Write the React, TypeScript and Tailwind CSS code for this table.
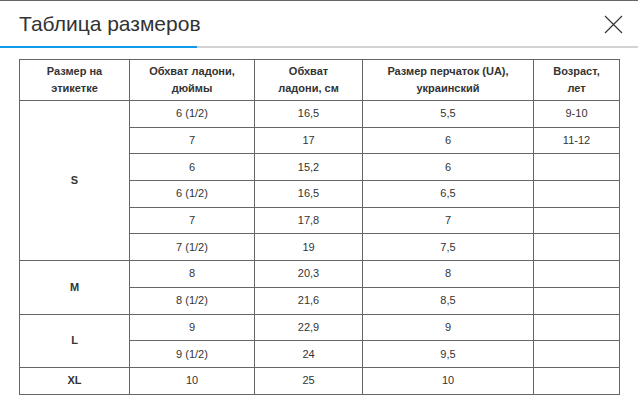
import React from "react";

type Row = { size?: string; span?: number; inch: string; cm: string; ua: string; age?: string };

const rows: Row[] = [
  { size: "S", span: 6, inch: "6 (1/2)", cm: "16,5", ua: "5,5", age: "9-10" },
  { inch: "7", cm: "17", ua: "6", age: "11-12" },
  { inch: "6", cm: "15,2", ua: "6" },
  { inch: "6 (1/2)", cm: "16,5", ua: "6,5" },
  { inch: "7", cm: "17,8", ua: "7" },
  { inch: "7 (1/2)", cm: "19", ua: "7,5" },
  { size: "M", span: 2, inch: "8", cm: "20,3", ua: "8" },
  { inch: "8 (1/2)", cm: "21,6", ua: "8,5" },
  { size: "L", span: 2, inch: "9", cm: "22,9", ua: "9" },
  { inch: "9 (1/2)", cm: "24", ua: "9,5" },
  { size: "XL", span: 1, inch: "10", cm: "25", ua: "10" },
];

const cell = "border border-[#666] text-center align-middle h-[26.7px] p-0";

export default function App() {
  return (
    <div
      className="w-[638px] h-[405px] bg-white border-t border-[#666] overflow-hidden text-[#333]"
      style={{ fontFamily: "'Liberation Sans', Arial, sans-serif" }}
    >
      <div className="flex items-center h-[45px]">
        <h1 className="pl-[19px] text-[21px] font-normal leading-none text-[#333]">Таблица размеров</h1>
        <button className="ml-auto mr-[15px] mt-[1px] w-[19px] h-[19px] flex items-center justify-center">
          <svg width="19" height="19" viewBox="0 0 19 19" fill="none" stroke="#333" strokeWidth="1.1">
            <path d="M1 1L18 18M18 1L1 18" />
          </svg>
        </button>
      </div>
      <div className="flex h-[2px]">
        <div className="w-[197px] bg-[#0e9ae8]" />
        <div className="flex-1 bg-[#d2d2d2]" />
      </div>

      <div className="pl-[19px] pt-[11px]">
        <table className="table-fixed border-collapse w-[600px] text-[11px] leading-[17px]">
          <colgroup>
            <col className="w-[110px]" />
            <col className="w-[125px]" />
            <col className="w-[108px]" />
            <col className="w-[171px]" />
            <col className="w-[86px]" />
          </colgroup>
          <thead>
            <tr className="font-bold">
              <th className="border border-[#666] h-[41px] p-0 font-bold">Размер на<br />этикетке</th>
              <th className="border border-[#666] h-[41px] p-0 font-bold">Обхват ладони,<br />дюймы</th>
              <th className="border border-[#666] h-[41px] p-0 font-bold">Обхват<br />ладони, см</th>
              <th className="border border-[#666] h-[41px] p-0 font-bold">Размер перчаток (UA),<br />украинский</th>
              <th className="border border-[#666] h-[41px] p-0 font-bold">Возраст,<br />лет</th>
            </tr>
          </thead>
          <tbody>
            {rows.map((r, i) => (
              <tr key={i}>
                {r.size && (
                  <td rowSpan={r.span} className={`${cell} font-bold`}>
                    {r.size}
                  </td>
                )}
                <td className={cell}>{r.inch}</td>
                <td className={cell}>{r.cm}</td>
                <td className={cell}>{r.ua}</td>
                <td className={cell}>{r.age ?? ""}</td>
              </tr>
            ))}
          </tbody>
        </table>
      </div>
    </div>
  );
}
